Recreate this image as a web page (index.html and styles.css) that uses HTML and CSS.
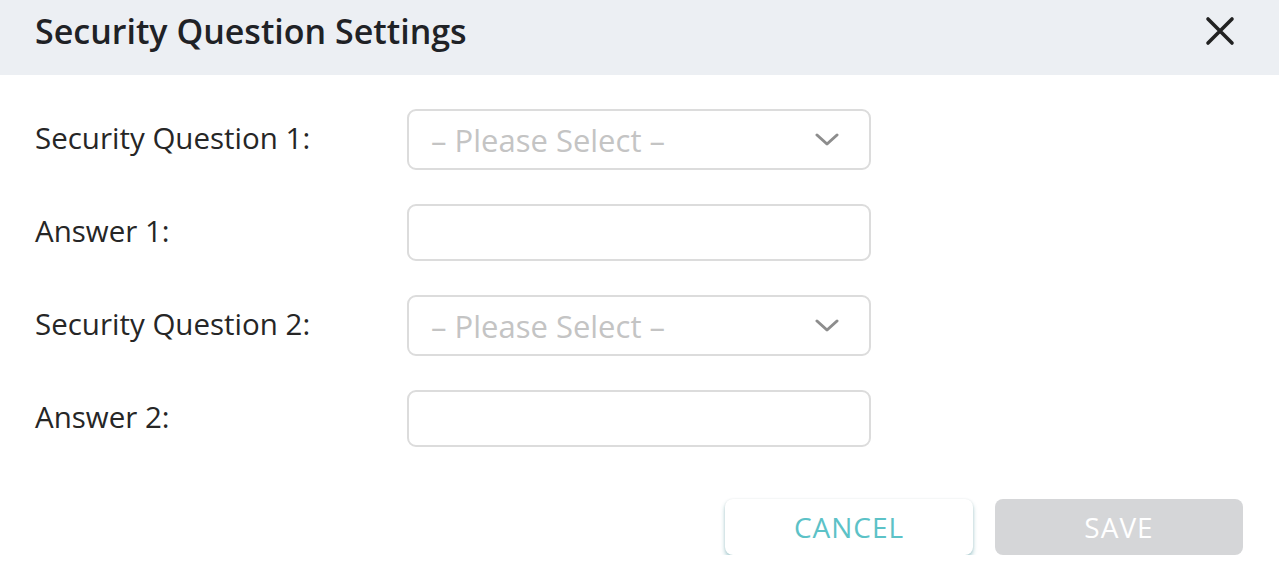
FILE: index.html
```html
<!DOCTYPE html>
<html lang="en">
<head>
    <meta charset="UTF-8">
    <meta name="viewport" content="width=device-width, initial-scale=1.0">
    <title>Security Question Settings</title>
    <link rel="stylesheet" href="styles.css">
</head>
<body>
    <div class="dialog">
        <div class="head">
            <div class="title">Security Question Settings</div>
            <div class="close">
                <svg width="30" height="30" viewBox="0 0 30 30">
                    <path d="M3 3 L27 27 M27 3 L3 27" stroke="#222" stroke-width="3.6" stroke-linecap="round"/>
                </svg>
            </div>
        </div>
        <div class="form">
            <div class="row">
                <div class="label">Security Question 1:</div>
                <div class="field select">
                    <span class="placeholder">– Please Select –</span>
                    <svg class="arrow" width="24" height="14" viewBox="0 0 24 14">
                        <path d="M2 2 L12 11 L22 2" fill="none" stroke="#8d8d8d" stroke-width="3" stroke-linecap="round" stroke-linejoin="round"/>
                    </svg>
                </div>
            </div>
            <div class="row">
                <div class="label">Answer 1:</div>
                <div class="field input"></div>
            </div>
            <div class="row">
                <div class="label">Security Question 2:</div>
                <div class="field select">
                    <span class="placeholder">– Please Select –</span>
                    <svg class="arrow" width="24" height="14" viewBox="0 0 24 14">
                        <path d="M2 2 L12 11 L22 2" fill="none" stroke="#8d8d8d" stroke-width="3" stroke-linecap="round" stroke-linejoin="round"/>
                    </svg>
                </div>
            </div>
            <div class="row">
                <div class="label">Answer 2:</div>
                <div class="field input"></div>
            </div>
        </div>
        <div class="actions">
            <button class="btn cancel">CANCEL</button>
            <button class="btn save">SAVE</button>
        </div>
    </div>
</body>
</html>
```

FILE: styles.css
```css
body {
    font-family: "Open Sans", "Noto Sans", sans-serif;
    background-color: #fff;
    margin: 0;
    padding: 0;
    color: #222;
}
.head {
    background-color: #eceff3;
    height: 75px;
    display: flex;
    align-items: center;
    justify-content: space-between;
    padding: 0 44px 0 35px;
}
.title {
    font-size: 34px;
    line-height: 40px;
    font-weight: 600;
    color: #1f2226;
    margin-top: -13px;
}
.close {
    display: flex;
    margin-top: -14px;
}
.form {
    padding: 34px 0 0 35px;
    display: flex;
    flex-direction: column;
    gap: 34px;
}
.row {
    display: flex;
    align-items: center;
}
.label {
    width: 372px;
    font-size: 29.5px;
    line-height: 36px;
    color: #262626;
    margin-top: -3px;
}
.field {
    box-sizing: border-box;
    width: 464px;
    border: 2px solid #dcdcdc;
    border-radius: 9px;
    background: #fff;
}
.select {
    height: 61px;
    display: flex;
    align-items: center;
    justify-content: space-between;
    padding: 0 30px 0 22px;
}
.input {
    height: 57px;
}
.placeholder {
    font-size: 31px;
    line-height: 36px;
    color: #c4c4c4;
}
.actions {
    display: flex;
    justify-content: flex-end;
    gap: 22px;
    padding: 52px 36px 0 0;
}
.btn {
    width: 248px;
    height: 56px;
    border: none;
    border-radius: 8px;
    font-family: "Open Sans", "Noto Sans", sans-serif;
    font-size: 28px;
    letter-spacing: 1px;
    cursor: pointer;
}
.cancel {
    background: #fff;
    color: #5cc2c7;
    box-shadow: 0 3px 4px rgba(60, 140, 150, 0.45), 0 0 2px rgba(0, 0, 0, 0.08);
}
.save {
    background: #d5d6d8;
    color: #fff;
}
```
